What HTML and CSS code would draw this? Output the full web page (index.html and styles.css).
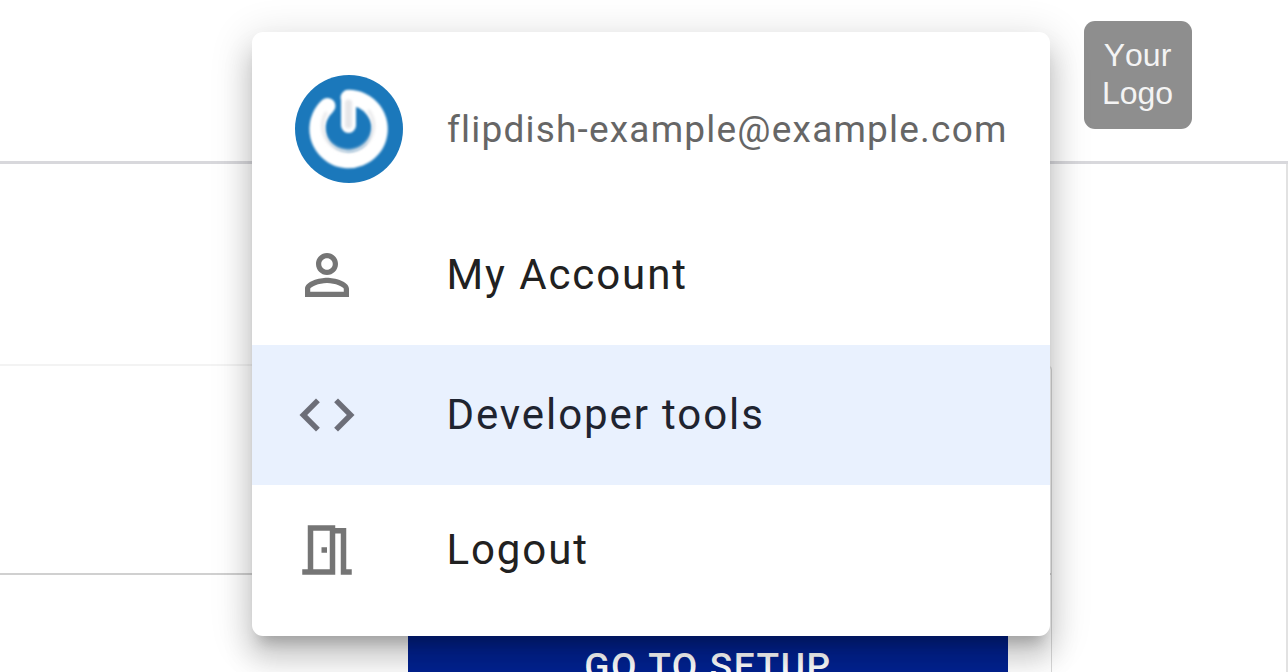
FILE: index.html
```html
<!DOCTYPE html>
<html lang="en">
<head>
<meta charset="utf-8">
<title>Account menu</title>
<link rel="stylesheet" href="styles.css">
</head>
<body>
<div class="page">
  <header class="topbar">
    <div class="logo">Your<br>Logo</div>
  </header>
  <main class="content">
    <section class="intro"></section>
    <section class="card">
      <div class="card-body"></div>
      <div class="card-actions"><button class="setup">GO TO SETUP</button></div>
    </section>
  </main>
  <nav class="menu">
    <div class="menu-row menu-user">
      <svg class="avatar" viewBox="0 0 108 108" aria-hidden="true">
        <defs><filter id="soft" x="-20%" y="-20%" width="140%" height="140%"><feGaussianBlur stdDeviation="0.8"/></filter><filter id="softer" x="-20%" y="-20%" width="140%" height="140%"><feGaussianBlur stdDeviation="1.5"/></filter></defs>
        <circle cx="54" cy="54" r="54" fill="#1b78bb"/>
        <g fill="none" stroke-linecap="round" filter="url(#soft)">
          <path d="M32.5 31A31.2 31.2 0 1 0 53.5 22.8" stroke="#fff" stroke-width="16"/>
          <path d="M53.5 22.5V50.5" stroke="#fff" stroke-width="15"/>
        </g>
        <g fill="none" stroke-linecap="round" filter="url(#softer)">
          <path d="M53.5 28V50" stroke="#e6e6e8" stroke-width="7"/>
          <path d="M31 38A25.5 25.5 0 1 0 74 36" stroke="#e8e8ea" stroke-width="3"/>
        </g>
      </svg>
      <span class="label label-muted">flipdish-example@example.com</span>
    </div>
    <a class="menu-row menu-item">
      <svg class="icon icon-grey" viewBox="0 0 24 24" aria-hidden="true"><path d="M12 5.9c1.16 0 2.1.94 2.1 2.1s-.94 2.1-2.1 2.1S9.9 9.16 9.9 8s.94-2.1 2.1-2.1m0 9c2.97 0 6.1 1.46 6.1 2.1v1.1H5.9V17c0-.64 3.13-2.1 6.1-2.1M12 4C9.79 4 8 5.79 8 8s1.79 4 4 4 4-1.79 4-4-1.79-4-4-4zm0 9c-2.67 0-8 1.34-8 4v3h16v-3c0-2.66-5.33-4-8-4z"/></svg>
      <span class="label">My Account</span>
    </a>
    <a class="menu-row menu-item is-active">
      <svg class="icon icon-slate" viewBox="0 0 24 24" aria-hidden="true"><path d="M9.4 16.6L4.8 12l4.6-4.6L8 6l-6 6 6 6 1.4-1.4zm5.2 0l4.6-4.6-4.6-4.6L16 6l6 6-6 6-1.4-1.4z"/></svg>
      <span class="label">Developer tools</span>
    </a>
    <a class="menu-row menu-item menu-last">
      <svg class="icon icon-grey" viewBox="0 0 24 24" aria-hidden="true"><path d="M19 19V4h-4V3H5v16H3v2h12V6h2v15h4v-2h-2zm-6 0H7V5h6v14zm-3-8h2v2h-2z"/></svg>
      <span class="label">Logout</span>
    </a>
  </nav>
</div>
</body>
</html>
```
FILE: styles.css
```css
* { box-sizing: border-box; }
html, body { margin: 0; padding: 0; }
body { background: #fff; font-family: Roboto, "Liberation Sans", sans-serif; }
.page { position: relative; width: 1288px; height: 672px; overflow: hidden; background: #fff; }

.topbar { height: 164px; padding: 21px 96px 0 0; display: flex; justify-content: flex-end; align-items: flex-start; border-bottom: 3px solid #d8d8dc; }
.logo { width: 108px; height: 108px; border-radius: 11px; background: #8e8e8e; color: #f4f4f4; font: 32px/38px "Liberation Sans", Arial, sans-serif; font-kerning: none; text-align: center; padding: 15px 1px 0 0; }

.content { height: 508px; border-right: 2px solid #e2e2e2; background: #fff; }
.intro { height: 200px; }
.card { width: 1052px; height: 308px; border-top: 2px solid #f3f3f3; border-right: 1px solid #d8d8d8; border-top-right-radius: 6px; }
.card-body { height: 209px; border-bottom: 2px solid #d0d0d0; }
.card-actions { padding: 60px 0 0 408px; }
.setup { display: block; width: 600px; height: 80px; margin: -20px 0 0; padding: 24px 0 0; border: 0; background: #002291; color: #fff; font: 500 37px/40px Roboto, sans-serif; letter-spacing: 1.6px; text-align: center; }

.menu { position: absolute; left: 252px; top: 32px; width: 798px; height: 604px; background: #fff; border-radius: 11px; display: flex; flex-direction: column; box-shadow: 0 14px 14px -8px rgba(0,0,0,.2), 0 22px 28px 3px rgba(0,0,0,.14), 0 8px 39px 6px rgba(0,0,0,.12); overflow: hidden; }
.menu-row { display: flex; align-items: center; padding-left: 43px; }
.menu-user { padding-top: 43px; padding-bottom: 22px; height: 173px; }
.menu-item { height: 140px; }
.menu-last { height: 130px; }
.is-active { background: #e9f1fe; }
.avatar { width: 108px; height: 108px; flex: none; margin-right: 44px; }
.icon { width: 66px; height: 66px; flex: none; margin-left: -1px; margin-right: 86.5px; }
.icon-grey { fill: #757575; }
.icon-slate { fill: #6c6e78; }
.label { font-size: 42px; line-height: 56px; letter-spacing: 1.9px; color: #212121; white-space: nowrap; }
.is-active .label { color: #1f2430; }
.label-muted { font-size: 37px; letter-spacing: 1.2px; color: #666; padding-top: 2px; }
```
